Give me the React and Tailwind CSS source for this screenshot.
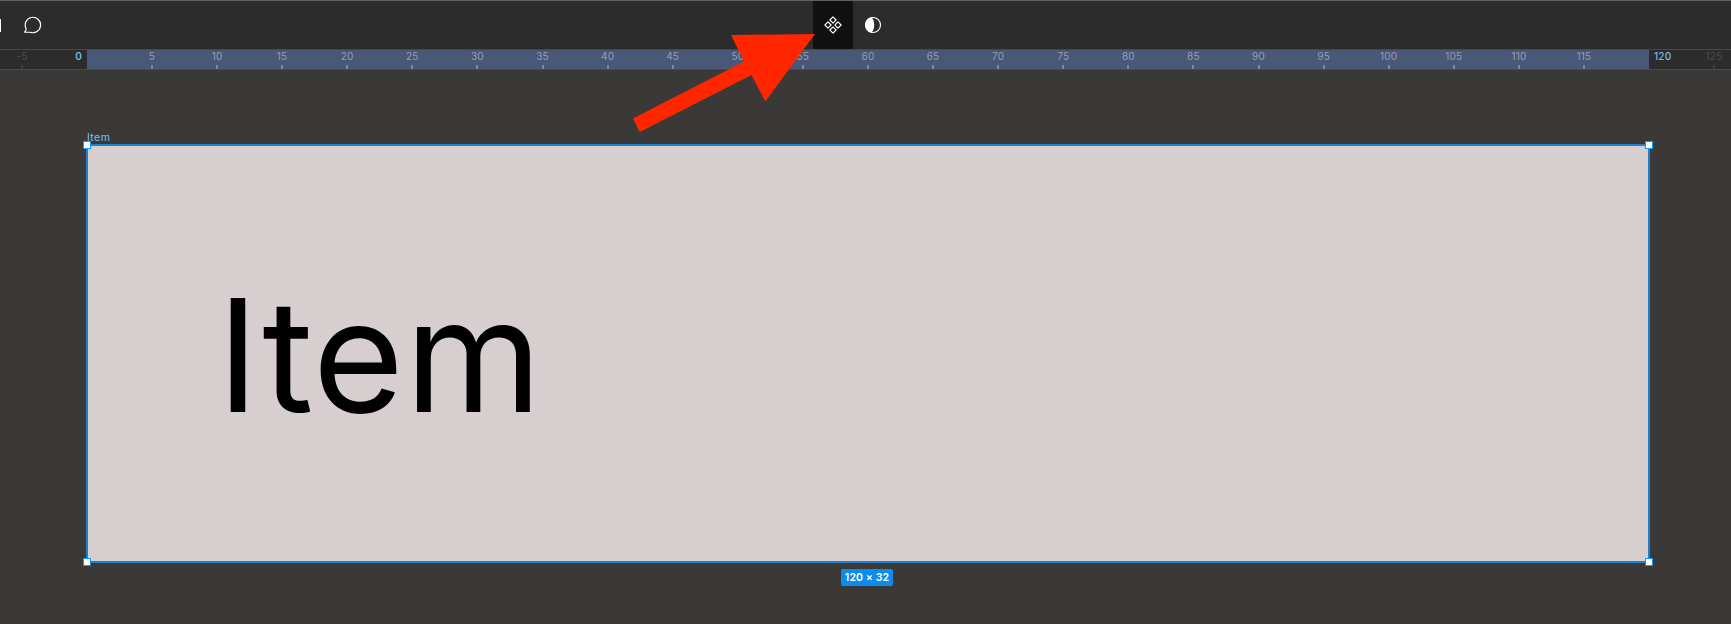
const MARKS = Array.from({ length: 23 }, (_, i) => (i + 1) * 5);

function Mark({ value, muted = false }) {
  return (
    <div
      className={`flex h-[19px] flex-1 flex-col items-center justify-between ${muted ? "text-[#4a4a4a]" : "text-[#939db4]"}`}
    >
      <span className="leading-[12px]">{value}</span>
      <span className={`h-[4px] w-[2px] ${muted ? "bg-[#404040]" : "bg-[#7c869e]"}`} />
    </div>
  );
}

function CommentIcon() {
  return (
    <svg className="h-[18px] w-[20px]" viewBox="0 0 20 18" fill="none" stroke="#fff" strokeWidth="1.15">
      <path d="M3.1 12.6A7.7 7.7 0 1 1 7.2 16.2L1.3 16.2Q3.2 15.2 3.1 12.6Z" />
    </svg>
  );
}

function ComponentIcon() {
  return (
    <svg className="size-[18px]" viewBox="0 0 18 18" fill="none" stroke="#fff" strokeWidth="1.15" strokeLinejoin="round">
      <path d="M9 .9 12.1 4 9 7.1 5.9 4ZM9 10.9 12.1 14 9 17.1 5.9 14ZM4 5.9 7.1 9 4 12.1 .9 9ZM14 5.9 17.1 9 14 12.1 10.9 9Z" />
    </svg>
  );
}

function MaskIcon() {
  return (
    <svg className="size-[18px]" viewBox="0 0 18 18" fill="none">
      <circle cx="9" cy="9" r="7.5" stroke="#fff" strokeWidth="1.1" />
      <path d="M7.4 1.3C11.2 4.5 11.2 13.5 7.4 16.7A7.9 7.9 0 0 1 7.4 1.3Z" fill="#fff" />
    </svg>
  );
}

function Handle({ position }) {
  return <span className={`absolute size-[8px] border border-[#0d99ff] bg-white ${position}`} />;
}

export default function App() {
  return (
    <div className="relative flex h-[624px] w-[1731px] flex-col overflow-hidden bg-[#3a3937] font-['Inter',sans-serif]">
      <header className="flex h-[50px] shrink-0 items-stretch border-t border-b border-t-[#5f6064] border-b-[#474747] bg-[#2c2c2c]">
        <div className="flex w-[813px] items-center gap-[22px]">
          <span className="h-[13px] w-px bg-white" />
          <CommentIcon />
        </div>
        <button className="flex w-[40px] items-center justify-center bg-[#111]">
          <ComponentIcon />
        </button>
        <button className="flex w-[40px] items-center justify-center">
          <MaskIcon />
        </button>
      </header>

      <div className="flex h-[20px] shrink-0 border-b border-[#494949] bg-[#2c2c2c] text-[10px] tracking-[0.2px]">
        <div className="flex w-[87px] shrink-0">
          <div className="flex w-[44px]">
            <Mark value="-5" muted />
          </div>
          <span className="flex-1 pr-[5px] text-right font-semibold leading-[12px] text-[#7cb8e4]">0</span>
        </div>
        <div className="flex w-[1562px] shrink-0 bg-[#4a5878] px-[32.4px]">
          {MARKS.map((value) => (
            <Mark key={value} value={value} />
          ))}
        </div>
        <div className="flex flex-1">
          <span className="w-[32px] shrink-0 pl-[5px] font-medium leading-[12px] text-[#7cb8e4]">120</span>
          <div className="flex w-[66px] shrink-0">
            <Mark value="125" muted />
          </div>
        </div>
      </div>

      <main className="flex flex-1 flex-col pl-[86px]">
        <div className="mt-[60px] h-[14px] pl-px text-[10.5px] leading-[15px] tracking-[0.4px] text-[#7cc4f8]">Item</div>
        <div className="relative flex h-[419px] w-[1564px] items-center border-2 border-[#1c82cf] bg-[#d7cecf] pt-[5px] pl-[129px]">
          <span className="text-[156.25px] font-[385] leading-none tracking-[1px] text-black [font-optical-sizing:none]">Item</span>
          <Handle position="-left-[5px] -top-[5px]" />
          <Handle position="-right-[5px] -top-[5px]" />
          <Handle position="-left-[5px] -bottom-[5px]" />
          <Handle position="-right-[5px] -bottom-[5px]" />
        </div>
        <div className="mt-[6px] ml-[755px] flex h-[17px] w-[52px] items-center justify-center rounded-[2px] bg-[#0d8cf0] text-[10.5px] font-semibold tracking-[0.1px] text-white">
          120 × 32
        </div>
      </main>

      <svg className="pointer-events-none absolute left-[620px] top-[20px] h-[120px] w-[210px]" viewBox="620 20 210 120">
        <path d="M815 34 731 35 744 61.5 633 118.5 639.7 132 751.5 75 765.3 101.5Z" fill="#ff2600" />
      </svg>
    </div>
  );
}
